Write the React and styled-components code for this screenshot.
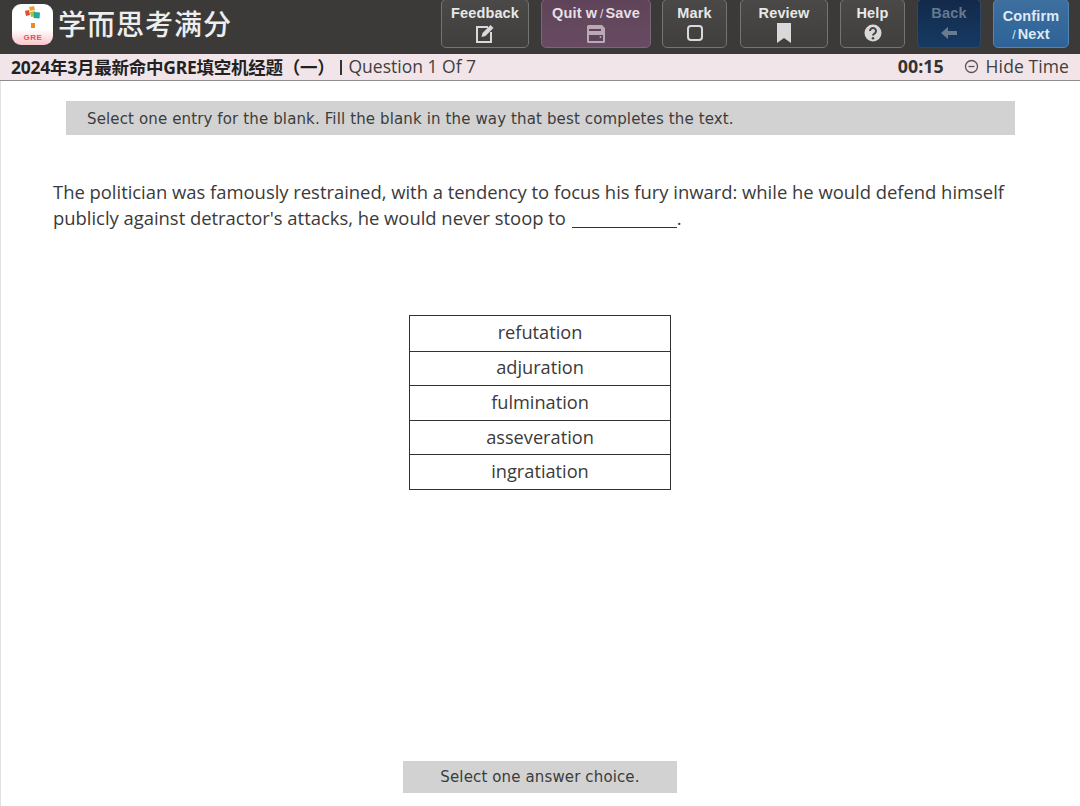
import React from "react";
import styled, { createGlobalStyle } from "styled-components";

const Global = createGlobalStyle`
  html, body { margin: 0; padding: 0; background: #fff; }
  #root { width: 1080px; height: 806px; overflow: hidden; }
`;
const Page = styled.div`
  width: 1080px; height: 806px; display: flex; flex-direction: column; box-sizing: border-box;
  font-family: "Open Sans", "Noto Sans CJK SC", sans-serif; color: #333;
`;
const TopBar = styled.header`
  height: 54px; flex: none; background: #3b3a39; display: flex; align-items: flex-start; padding: 0 11px 0 12px; box-sizing: border-box;
`;
const Brand = styled.div`
  display: flex; align-items: center; gap: 5px; height: 41px; margin-top: 4px; flex: 1;
`;
const BrandName = styled.span`
  font-family: "Noto Sans CJK SC", sans-serif; font-size: 28px; line-height: 32px; margin-bottom: 3px; font-weight: 500; color: #eeeeee; letter-spacing: 1px;
`;
const Tools = styled.nav`
  display: flex; gap: 12px;
`;
const palettes = {
  gray: "background:linear-gradient(#4a4947,#403f3e);border-color:#75746f;color:#e8e8e8;",
  plum: "background:linear-gradient(#5f4459,#684b62);border-color:#7d6478;color:#e6dfe4;",
  navy: "background:linear-gradient(#13294a,#163a63);border-color:#2d4768;color:#66788e;",
  blue: "background:linear-gradient(#3d6f9f,#2f6397);border-color:#5585b3;color:#dfeaf5;",
};
const Tool = styled.button`
  ${p => palettes[p.$tone]}
  width: ${p => p.$w}px; height: 49px; margin: -1px ${p => p.$nudge || 0}px 0 ${p => -(p.$nudge || 0)}px; box-sizing: border-box; border-width: 1px; border-style: solid; border-radius: 5px; padding: 5px 0 0;
  display: flex; flex-direction: column; align-items: center; gap: 2px;
  font-family: "Liberation Sans", Arial, sans-serif; font-weight: 700; font-size: 14.5px; letter-spacing: .15px; line-height: 16px; white-space: nowrap;
`;
const ConfirmTool = styled(Tool)`
  padding-top: 8px; gap: 1px; line-height: 17px;
`;
const Slash = styled.span`
  font-weight: 400; font-size: 12px; letter-spacing: -.6px;
`;
const InfoBar = styled.div`
  height: 27px; flex: none; box-sizing: border-box; background: #f2e5e9; border-bottom: 1px solid #8f8c8d; display: flex; align-items: center; padding: 0 11px 2px; font-size: 17.5px; color: #3f3f3f;
`;
const TestName = styled.strong`
  font-family: "Noto Sans", "Noto Sans CJK SC", sans-serif; font-size: 17.5px; font-weight: 700; color: #222; letter-spacing: -.25px;
`;
const Progress = styled.span`
  margin-left: 5px; flex: 1; font-family: "Open Sans", sans-serif; font-size: 17.5px;
  &::before { content: ""; display: inline-block; width: 2px; height: 15px; background: #333; margin-right: 7px; vertical-align: -2px; }
`;
const Timer = styled.strong`
  font-family: "Open Sans", sans-serif; font-size: 17.8px; color: #333; margin-right: 20px;
`;
const HideTime = styled.span`
  display: flex; align-items: center; gap: 7px; font-size: 17.5px; letter-spacing: .1px;
`;
const Main = styled.main`
  flex: 1; min-height: 0; display: flex; flex-direction: column; align-items: stretch; border-left: 1px solid #e2e2e2; padding: 20px 0 13px 52px;
`;
const Direction = styled.div`
  width: 949px; height: 34px; margin-left: 13px; box-sizing: border-box; padding: 1px 0 0 21px; background: #d2d2d2; display: flex; align-items: center;
  font-family: "DejaVu Sans", Verdana, sans-serif; font-size: 15px; letter-spacing: .13px; color: #3c3c3c;
`;
const Question = styled.p`
  margin: 44px 0 0; width: 990px; font-size: 18.44px; line-height: 26px; color: #3a3a3a; letter-spacing: -.02px;
`;
const Blank = styled.span`
  display: inline-block; width: 105px; margin-left: 1px; border-bottom: 1px solid #333; height: 20px; vertical-align: -3px;
`;
const Choices = styled.ul`
  list-style: none; width: 262px; margin: 84px 0 0 356px; padding: 0; box-sizing: border-box; border: 1px solid #333; 
`;
const Choice = styled.li`
  height: 34.6px; display: flex; align-items: center; justify-content: center; padding-bottom: 2px; font-size: 18.2px; color: #3a3a3a; box-sizing: border-box;
  & + & { border-top: 1px solid #333; }
`;
const Hint = styled.div`
  margin: auto 0 0 350px; width: 274px; height: 32px; background: #d2d2d2; display: flex; align-items: center; justify-content: center;
  font-family: "DejaVu Sans", Verdana, sans-serif; font-size: 15px; letter-spacing: .13px; color: #3c3c3c;
`;

const Logo = () => (
  <svg width="41" height="41" viewBox="0 0 41 41">
    <defs><linearGradient id="lg" x1="0" y1="0" x2="0" y2="1"><stop offset="0" stopColor="#fff"/><stop offset=".62" stopColor="#fff"/><stop offset="1" stopColor="#f8c6cb"/></linearGradient></defs>
    <rect width="41" height="41" rx="9" fill="url(#lg)"/>
    <path d="M13 7l4-1 1 5-4 1z" fill="#e2483a"/>
    <path d="M17 3l5-1 1 4-5 1z" fill="#f0a02c"/>
    <path d="M18 8l5-1 1 5-5 1z" fill="#a8c23a"/>
    <path d="M22 8l6 .5-.5 6-6-.5z" fill="#25a79a"/>
    <path d="M19 19h4v5h-4z" fill="#ee8a2c"/>
    <text x="21" y="36" textAnchor="middle" fontFamily="Liberation Sans, sans-serif" fontWeight="700" fontSize="8" letterSpacing=".5" fill="#e2505c">GRE</text>
  </svg>
);
const Ic = ({ children, w = 20, h = 20 }) => <svg width={w} height={h} viewBox="0 0 20 20">{children}</svg>;
const c = "#d9d9d9";

export default function App() {
  return (
    <Page>
      <Global />
      <TopBar>
        <Brand><Logo /><BrandName>学而思考满分</BrandName></Brand>
        <Tools>
          <Tool $tone="gray" $w={88}>Feedback
            <Ic><path d="M13 4H2v15h14V9" fill="none" stroke={c} strokeWidth="2"/><path d="M6.500 14l1-4L15.500 2l3 3-8 8z" fill={c}/></Ic>
          </Tool>
          <Tool $tone="plum" $w={110}><span>Quit w<Slash> / </Slash>Save</span>
            <Ic><path d="M1 2.500A1.500 1.500 0 0 1 2.500 1H16l3 3v13.500a1.500 1.500 0 0 1-1.500 1.500h-15A1.500 1.500 0 0 1 1 17.500z" fill="#b9a8b5"/><path d="M3 11h14v6H3z" fill="#5f4459"/><path d="M3 5h12v2H3z" fill="#5f4459"/><circle cx="14.500" cy="13" r="1" fill="#b9a8b5"/></Ic>
          </Tool>
          <Tool $tone="gray" $w={65} $nudge={1}>Mark
            <Ic><rect x="3" y="3" width="14" height="14" rx="3" fill="none" stroke={c} strokeWidth="2"/></Ic>
          </Tool>
          <Tool $tone="gray" $w={88}>Review
            <Ic><path d="M3 0h14v20l-7-5-7 5z" fill={c}/></Ic>
          </Tool>
          <Tool $tone="gray" $w={65}>Help
            <Ic><circle cx="10" cy="10" r="8.500" fill={c}/><path d="M7 8a3 3 0 1 1 4.500 2.600c-1 .6-1.500 1-1.500 2" fill="none" stroke="#444" strokeWidth="2"/><circle cx="10" cy="15.200" r="1.300" fill="#444"/></Ic>
          </Tool>
          <Tool $tone="navy" $w={64}>Back
            <Ic><path d="M2 10l7-6v4h9v4H9v4z" fill="#6b7b8f"/></Ic>
          </Tool>
          <ConfirmTool $tone="blue" $w={76}>Confirm<span><Slash>/ </Slash>Next</span></ConfirmTool>
        </Tools>
      </TopBar>
      <InfoBar>
        <TestName>2024年3月最新命中GRE填空机经题（一）</TestName>
        <Progress>Question 1 Of 7</Progress>
        <Timer>00:15</Timer>
        <HideTime>
          <svg width="15" height="15" viewBox="0 0 15 15"><circle cx="7.500" cy="7.500" r="6" fill="none" stroke="#555" strokeWidth="1.300"/><path d="M4.500 7.500h6" stroke="#555" strokeWidth="1.300"/></svg>
          Hide Time
        </HideTime>
      </InfoBar>
      <Main>
        <Direction>Select one entry for the blank. Fill the blank in the way that best completes the text.</Direction>
        <Question>The politician was famously restrained, with a tendency to focus his fury inward: while he would defend himself publicly against detractor's attacks, he would never stoop to <Blank />.</Question>
        <Choices>
          {["refutation", "adjuration", "fulmination", "asseveration", "ingratiation"].map(t => <Choice key={t}>{t}</Choice>)}
        </Choices>
        <Hint>Select one answer choice.</Hint>
      </Main>
    </Page>
  );
}
